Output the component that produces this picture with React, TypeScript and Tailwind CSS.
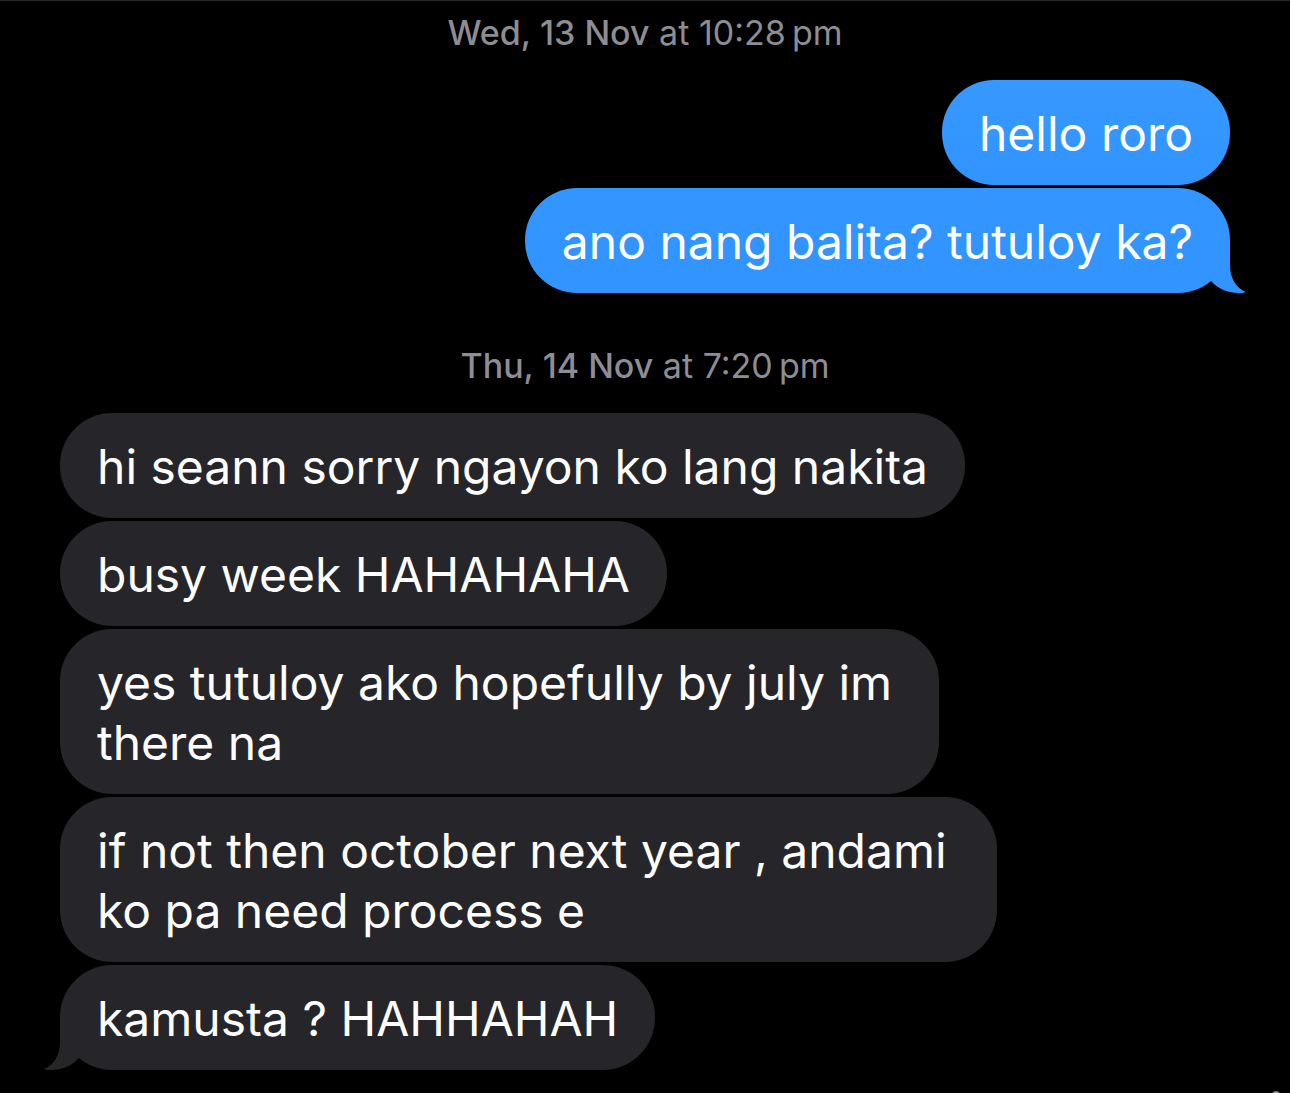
import React from "react";
import { clsx } from "clsx";

type Message = { text: string; size?: string };
type Thread = { day: string; time: string; side: "sent" | "received"; messages: Message[] };

const threads: Thread[] = [
  {
    day: "Wed, 13 Nov",
    time: "10:28\u2009pm",
    side: "sent",
    messages: [{ text: "hello roro" }, { text: "ano nang balita? tutuloy ka?" }],
  },
  {
    day: "Thu, 14 Nov",
    time: "7:20\u2009pm",
    side: "received",
    messages: [
      { text: "hi seann sorry ngayon ko lang nakita" },
      { text: "busy week HAHAHAHA" },
      { text: "yes tutuloy ako hopefully by july im there na", size: "max-w-[879px]" },
      { text: "if not then october next year , andami ko pa need process e", size: "max-w-[937px]" },
      { text: "kamusta ? HAHHAHAH" },
    ],
  },
];

function Tail({ sent }: { sent: boolean }) {
  return (
    <svg
      aria-hidden="true"
      viewBox="0 0 46 52"
      className={clsx(
        "absolute bottom-0 h-[52px] w-[46px]",
        sent ? "-right-4 fill-[#3194ff]" : "-left-4 -scale-x-100 fill-[#26252a]",
      )}
    >
      <path d="M0 0H30V24C30 37 36 47 46 51C44 52 42 52 39 52C28 52 18 48 11 40L0 30Z" />
    </svg>
  );
}

function Bubble({ message, sent, last }: { message: Message; sent: boolean; last: boolean }) {
  return (
    <li
      className={clsx(
        "relative rounded-[52px] px-[37px] pt-6 pb-[21px] text-[48px] leading-[60px] text-white",
        sent ? "bg-linear-to-b to-[#3194ff]" : "bg-[#26252a]",
        sent && (last ? "from-[#3395ff]" : "from-[#3798ff]"),
        message.size ?? "max-w-full",
      )}
    >
      {last && <Tail sent={sent} />}
      <span className="relative">{message.text}</span>
    </li>
  );
}

export default function App() {
  return (
    <main className="relative min-h-screen overflow-hidden border-t border-[#262729] bg-black px-[60px] pt-3 pb-[23px] font-['Inter',sans-serif]">
      {threads.map((thread, t) => (
        <section key={thread.day} className={t > 0 ? "mt-[53px]" : ""}>
          <h2 className="text-center text-[34px] leading-10 font-normal text-[#8d8d93]">
            <span className="font-medium">{thread.day}</span> at {thread.time}
          </h2>
          <ul
            className={clsx(
              "mt-[27px] flex flex-col gap-[3px]",
              thread.side === "sent" ? "items-end" : "items-start",
            )}
          >
            {thread.messages.map((message, i) => (
              <Bubble
                key={message.text}
                message={message}
                sent={thread.side === "sent"}
                last={i === thread.messages.length - 1}
              />
            ))}
          </ul>
        </section>
      ))}
      <span aria-hidden="true" className="absolute right-2.5 -bottom-1.5 size-2 rounded-full bg-[#8d8d93]" />
    </main>
  );
}
